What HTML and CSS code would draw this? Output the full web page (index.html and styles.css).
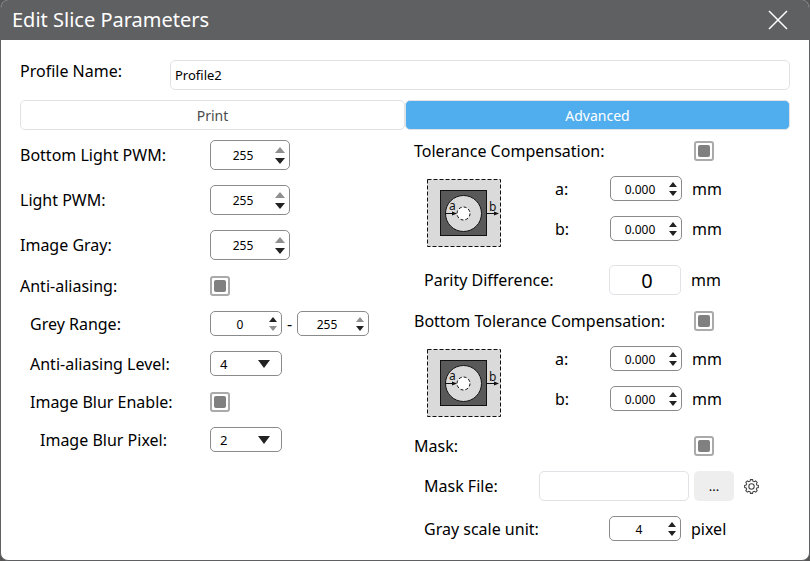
FILE: index.html
```html
<!DOCTYPE html>
<html lang="en">
<head>
<meta charset="utf-8">
<title>Edit Slice Parameters</title>
<link rel="stylesheet" href="styles.css">
</head>
<body>
<svg class="defs" aria-hidden="true">
  <symbol id="up" viewBox="0 0 10 6"><path d="M5 0L10 6H0z"/></symbol>
  <symbol id="down" viewBox="0 0 10 6"><path d="M0 0H10L5 6z"/></symbol>
  <symbol id="offsets" viewBox="0 0 75 70">
    <rect x="0.5" y="1.5" width="73" height="67" fill="#dadada" stroke="#111" stroke-dasharray="4 2"/>
    <rect x="13.5" y="12.5" width="46" height="45" fill="#595959" stroke="#111"/>
    <circle cx="36.5" cy="35.5" r="18" fill="#dadada" stroke="#111"/>
    <circle cx="36.5" cy="35.5" r="6.5" fill="#fff" stroke="#111" stroke-dasharray="3 2"/>
    <path d="M18 35.500H26M60 35.500H68" stroke="#111" fill="none"/>
    <path d="M25 33.500L30 35.500L25 37.500zM67 33.500L72 35.500L67 37.500z" fill="#111"/>
    <text x="22" y="32" font-size="12" fill="#111">a</text>
    <text x="62" y="33" font-size="12" fill="#111">b</text>
  </symbol>
</svg>
<main class="dialog">
  <header class="titlebar">
    <h1>Edit Slice Parameters</h1>
    <button class="close" type="button" aria-label="Close"><svg viewBox="0 0 20 20"><path d="M1 1L19 19M19 1L1 19"/></svg></button>
  </header>
  <form class="content">
    <div class="profile">
      <label for="profile">Profile Name:</label>
      <input class="text" id="profile" type="text" value="Profile2">
    </div>
    <div class="tabs">
      <button class="tab" type="button">Print</button>
      <button class="tab active" type="button">Advanced</button>
    </div>
    <div class="columns">
      <section class="column left">
        <div class="row"><label for="bpwm">Bottom Light PWM:</label>
          <span class="spin large"><input id="bpwm" type="number" value="255"><span class="arrows"><button type="button" disabled aria-label="Increase"><svg><use href="#up"/></svg></button><button type="button" aria-label="Decrease"><svg><use href="#down"/></svg></button></span></span></div>
        <div class="row"><label for="pwm">Light PWM:</label>
          <span class="spin large"><input id="pwm" type="number" value="255"><span class="arrows"><button type="button" disabled aria-label="Increase"><svg><use href="#up"/></svg></button><button type="button" aria-label="Decrease"><svg><use href="#down"/></svg></button></span></span></div>
        <div class="row"><label for="gray">Image Gray:</label>
          <span class="spin large"><input id="gray" type="number" value="255"><span class="arrows"><button type="button" disabled aria-label="Increase"><svg><use href="#up"/></svg></button><button type="button" aria-label="Decrease"><svg><use href="#down"/></svg></button></span></span></div>
        <div class="row check"><label for="aa">Anti-aliasing:</label><input id="aa" type="checkbox" checked></div>
        <div class="row"><label class="in1" for="gmin">Grey Range:</label>
          <span class="spin"><input id="gmin" type="number" value="0"><span class="arrows"><button type="button" aria-label="Increase"><svg><use href="#up"/></svg></button><button type="button" disabled aria-label="Decrease"><svg><use href="#down"/></svg></button></span></span>
          <span class="dash">-</span>
          <span class="spin"><input type="number" value="255" aria-label="Grey range maximum"><span class="arrows"><button type="button" disabled aria-label="Increase"><svg><use href="#up"/></svg></button><button type="button" aria-label="Decrease"><svg><use href="#down"/></svg></button></span></span></div>
        <div class="row"><label class="in1" for="level">Anti-aliasing Level:</label>
          <span class="drop"><select id="level"><option>4</option></select><svg viewBox="0 0 12 8"><path d="M0 0H12L6 8z"/></svg></span></div>
        <div class="row check"><label class="in1" for="blur">Image Blur Enable:</label><input id="blur" type="checkbox" checked></div>
        <div class="row"><label class="in2" for="blurpx">Image Blur Pixel:</label>
          <span class="drop"><select id="blurpx"><option>2</option></select><svg viewBox="0 0 12 8"><path d="M0 0H12L6 8z"/></svg></span></div>
      </section>
      <section class="column right">
        <div class="row check"><label for="tol">Tolerance Compensation:</label><input id="tol" type="checkbox" checked></div>
        <div class="tolerance">
          <svg class="figure" role="img" aria-label="Offsets a and b"><use href="#offsets"/></svg>
          <div class="pair">
            <div class="row"><label for="ta">a:</label><span class="spin"><input id="ta" type="text" value="0.000"><span class="arrows"><button type="button" aria-label="Increase"><svg><use href="#up"/></svg></button><button type="button" aria-label="Decrease"><svg><use href="#down"/></svg></button></span></span><span class="unit">mm</span></div>
            <div class="row"><label for="tb">b:</label><span class="spin"><input id="tb" type="text" value="0.000"><span class="arrows"><button type="button" aria-label="Increase"><svg><use href="#up"/></svg></button><button type="button" aria-label="Decrease"><svg><use href="#down"/></svg></button></span></span><span class="unit">mm</span></div>
          </div>
        </div>
        <div class="row after"><label class="in1" for="parity">Parity Difference:</label><input class="text parity" id="parity" type="text" value="0"><span class="unit">mm</span></div>
        <div class="row check"><label for="btol">Bottom Tolerance Compensation:</label><input id="btol" type="checkbox" checked></div>
        <div class="tolerance">
          <svg class="figure" role="img" aria-label="Offsets a and b"><use href="#offsets"/></svg>
          <div class="pair">
            <div class="row"><label for="ba">a:</label><span class="spin"><input id="ba" type="text" value="0.000"><span class="arrows"><button type="button" aria-label="Increase"><svg><use href="#up"/></svg></button><button type="button" aria-label="Decrease"><svg><use href="#down"/></svg></button></span></span><span class="unit">mm</span></div>
            <div class="row"><label for="bb">b:</label><span class="spin"><input id="bb" type="text" value="0.000"><span class="arrows"><button type="button" aria-label="Increase"><svg><use href="#up"/></svg></button><button type="button" aria-label="Decrease"><svg><use href="#down"/></svg></button></span></span><span class="unit">mm</span></div>
          </div>
        </div>
        <div class="row check after"><label for="mask">Mask:</label><input id="mask" type="checkbox" checked></div>
        <div class="row file"><label class="in1" for="maskfile">Mask File:</label><input class="text maskfile" id="maskfile" type="text"><button class="browse" type="button">...</button>
          <button class="gear" type="button" aria-label="Mask settings"><svg viewBox="0 0 14 14"><circle cx="7" cy="7" r="2.500"/><path d="M5.700 2L6 .6H8L8.300 2L9.600 2.500L10.800 1.700L12.300 3.200L11.500 4.400L12 5.700L13.400 6V8L12 8.300L11.500 9.600L12.300 10.800L10.800 12.300L9.600 11.500L8.300 12L8 13.400H6L5.700 12L4.400 11.500L3.200 12.300L1.700 10.800L2.500 9.600L2 8.300L.6 8V6L2 5.700L2.500 4.400L1.700 3.200L3.200 1.700L4.400 2.500z"/></svg></button></div>
        <div class="row"><label class="in1" for="unit">Gray scale unit:</label><span class="spin"><input id="unit" type="number" value="4"><span class="arrows"><button type="button" aria-label="Increase"><svg><use href="#up"/></svg></button><button type="button" aria-label="Decrease"><svg><use href="#down"/></svg></button></span></span><span class="unit">pixel</span></div>
      </section>
    </div>
  </form>
</main>
</body>
</html>
```
FILE: styles.css
```css
* { box-sizing: border-box; }
body {
  margin: 0;
  background: #575656;
  color: #000;
  font: 16px/20px "Noto Sans", "Open Sans", sans-serif;
}
button, input, select { font: inherit; color: inherit; margin: 0; padding: 0; }
button { border: 0; background: none; }
.defs { display: none; }

.dialog {
  min-height: 100vh;
  border: 1px solid #5f6062;
  border-top: 0;
  border-radius: 8px;
  background: #fff;
  overflow: hidden;
}
.titlebar {
  display: flex;
  align-items: center;
  justify-content: space-between;
  height: 40px;
  padding: 0 21px 0 11px;
  background: #5f6062;
  color: #fff;
}
h1 { margin: 0; font-size: 20px; font-weight: 400; }
.close { width: 20px; height: 20px; }
.close svg { display: block; width: 20px; height: 20px; fill: none; stroke: #fff; stroke-width: 1.5; }

.content { padding: 20px 19px 16px; }
.profile { display: flex; height: 30px; }
.profile label { width: 150px; padding-top: 1px; }
.text {
  height: 30px;
  border: 1px solid #e1e2e6;
  border-radius: 5px;
  background: #fff;
  min-width: 0;
}
.profile .text { flex: 1; padding: 0 4px; font-size: 13px; }

.tabs { display: flex; margin-top: 10px; }
.tab {
  flex: 1;
  height: 30px;
  padding-top: 2px;
  border: 1px solid #e1e2e6;
  border-radius: 5px;
  color: #4b4c4e;
  font-size: 14px;
}
.tab.active { background: #50aeee; color: #fff; }

.columns { display: grid; grid-template-columns: 1fr 1fr; margin-top: 10px; }
.column { display: flex; flex-direction: column; gap: 15px; }
.right { padding-left: 9px; }
.row { display: flex; align-items: center; }
.left label { width: 190px; }
.right label { width: 195px; }
.right .check label { width: 280px; }
.right .file label { width: 125px; }
.right .pair label { width: 55px; }
label.in1 { padding-left: 10px; }
label.in2 { padding-left: 20px; }
.check { height: 21px; align-items: flex-end; }
.after { margin-top: 2px; }

input[type="checkbox"] {
  appearance: none;
  display: grid;
  place-content: center;
  width: 20px;
  height: 20px;
  border: 2px solid #aaa;
  border-radius: 3px;
}
input[type="checkbox"]:checked::before {
  content: "";
  width: 12px;
  height: 12px;
  border-radius: 2px;
  background: #808080;
}

.spin, .drop {
  display: flex;
  align-items: center;
  width: 72px;
  height: 25px;
  border: 1px solid #8a8a8a;
  border-radius: 5px;
  font-size: 12px;
}
.spin.large { width: 80px; height: 30px; }
.spin input {
  appearance: textfield;
  flex: 1;
  min-width: 0;
  border: 0;
  padding-top: 2px;
  background: none;
  text-align: center;
}
.spin input::-webkit-inner-spin-button { appearance: none; }
.arrows { display: flex; flex-direction: column; gap: 4px; padding-right: 4px; }
.arrows button { display: block; height: 5px; }
.arrows svg { display: block; width: 8px; height: 5px; fill: #222; }
.arrows button:disabled svg { fill: #8f8f8f; }
.large .arrows { gap: 5px; }
.large .arrows button { height: 6px; }
.large .arrows svg { width: 10px; height: 6px; }
.dash { width: 15px; text-align: center; }

.drop { padding: 0 11px 0 9px; font-size: 13px; }
.drop select { appearance: none; flex: 1; min-width: 0; border: 0; background: none; }
.drop svg { width: 12px; height: 8px; fill: #222; }

.tolerance { display: flex; padding-left: 13px; }
.figure { width: 75px; height: 70px; margin: 2px 53px 0 0; }
.pair { display: flex; flex-direction: column; gap: 15px; }
.unit { margin-left: 10px; }
.parity { width: 72px; padding-left: 4px; font-size: 20px; text-align: center; }
.maskfile { width: 150px; }
.browse {
  width: 40px;
  height: 30px;
  margin-left: 5px;
  border-radius: 5px;
  background: #eee;
  font-size: 13px;
}
.gear { margin-left: 10px; }
.gear svg { display: block; width: 15px; height: 15px; fill: none; stroke: #444; stroke-width: 1; }
```
